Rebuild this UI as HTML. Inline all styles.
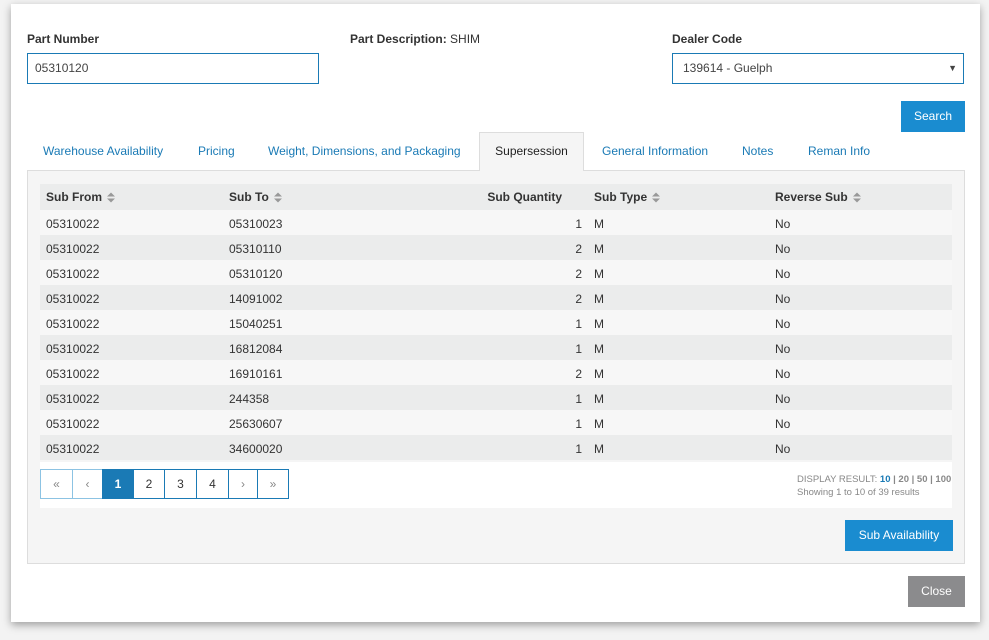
<!DOCTYPE html>
<html><head><style>
*{box-sizing:border-box;margin:0;padding:0}
body{width:989px;height:640px;background:#f3f3f3;font-family:"Liberation Sans",Arial,sans-serif;font-size:12px;color:#333;position:relative;overflow:hidden}
.modal{position:absolute;left:11px;top:4px;width:969px;height:618px;background:#fff;box-shadow:0 3px 8px rgba(0,0,0,.35)}
.a{position:absolute}
.lbl{font-weight:bold;font-size:12px;color:#333}
.inp{border:1px solid #1a7ab5;height:31px;padding-left:7px;line-height:29px;font-size:12px;color:#444}
.btn{background:#1a8cd0;color:#fff;text-align:center;font-size:12px}
.tab{color:#1a7ab5;font-size:12px;top:140px}
.panel{left:16px;top:166px;width:938px;height:394px;background:#f5f5f5;border:1px solid #ddd}
table{position:absolute;left:12px;top:13px;width:912px;border-collapse:collapse}
td,th{height:25px;font-size:12px;text-align:left;padding:0;color:#333}
td{padding-top:2px}
th{height:26px;font-weight:bold;background:#ebecec}
tr:nth-child(odd) td{background:#ebecec}
tr:nth-child(even) td{background:#f7f7f7}
.s{display:inline-block;vertical-align:middle;margin-left:2px}
.pg{position:absolute;left:12px;top:291px;width:912px;height:46px;background:#fff}
.pb{position:absolute;top:7px;height:30px;border:1px solid #1a7ab5;text-align:center;line-height:28px;font-size:12px;color:#333;background:#fff}
</style></head><body>
<div class="modal">
<div class="a lbl" style="left:16px;top:28px">Part Number</div>
<div class="a" style="left:339px;top:28px"><b>Part Description:</b> SHIM</div>
<div class="a lbl" style="left:661px;top:28px">Dealer Code</div>
<div class="a inp" style="left:16px;top:49px;width:292px">05310120</div>
<div class="a inp" style="left:661px;top:49px;width:292px;padding-left:10px">139614 - Guelph<span style="position:absolute;right:6px;top:0;font-size:9px;color:#444">▼</span></div>
<div class="a btn" style="left:890px;top:97px;width:64px;height:31px;line-height:31px">Search</div>
<div class="a tab" style="left:32px">Warehouse Availability</div>
<div class="a tab" style="left:187px">Pricing</div>
<div class="a tab" style="left:257px">Weight, Dimensions, and Packaging</div>
<div class="a" style="left:468px;top:128px;width:105px;height:39px;background:#f5f5f5;border:1px solid #ddd;border-bottom:none;z-index:2;text-align:center;line-height:37px;color:#222">Supersession</div>
<div class="a tab" style="left:591px">General Information</div>
<div class="a tab" style="left:731px">Notes</div>
<div class="a tab" style="left:797px">Reman Info</div>
<div class="a panel">
<table>
<tr><th style="width:189px;padding-left:6px">Sub From <svg class="s" width="8" height="11" viewBox="0 0 8 11"><path d="M0 4.5L4 0.5L8 4.5ZM0 6.5L4 10.5L8 6.5Z" fill="#999"/></svg></th><th style="width:176px">Sub To <svg class="s" width="8" height="11" viewBox="0 0 8 11"><path d="M0 4.5L4 0.5L8 4.5ZM0 6.5L4 10.5L8 6.5Z" fill="#999"/></svg></th><th style="width:189px;text-align:right;padding-right:32px">Sub Quantity</th><th style="width:181px">Sub Type <svg class="s" width="8" height="11" viewBox="0 0 8 11"><path d="M0 4.5L4 0.5L8 4.5ZM0 6.5L4 10.5L8 6.5Z" fill="#999"/></svg></th><th>Reverse Sub <svg class="s" width="8" height="11" viewBox="0 0 8 11"><path d="M0 4.5L4 0.5L8 4.5ZM0 6.5L4 10.5L8 6.5Z" fill="#999"/></svg></th></tr>
<tr><td style="padding-left:6px">05310022</td><td>05310023</td><td style="text-align:right;padding-right:12px">1</td><td>M</td><td>No</td></tr>
<tr><td style="padding-left:6px">05310022</td><td>05310110</td><td style="text-align:right;padding-right:12px">2</td><td>M</td><td>No</td></tr>
<tr><td style="padding-left:6px">05310022</td><td>05310120</td><td style="text-align:right;padding-right:12px">2</td><td>M</td><td>No</td></tr>
<tr><td style="padding-left:6px">05310022</td><td>14091002</td><td style="text-align:right;padding-right:12px">2</td><td>M</td><td>No</td></tr>
<tr><td style="padding-left:6px">05310022</td><td>15040251</td><td style="text-align:right;padding-right:12px">1</td><td>M</td><td>No</td></tr>
<tr><td style="padding-left:6px">05310022</td><td>16812084</td><td style="text-align:right;padding-right:12px">1</td><td>M</td><td>No</td></tr>
<tr><td style="padding-left:6px">05310022</td><td>16910161</td><td style="text-align:right;padding-right:12px">2</td><td>M</td><td>No</td></tr>
<tr><td style="padding-left:6px">05310022</td><td>244358</td><td style="text-align:right;padding-right:12px">1</td><td>M</td><td>No</td></tr>
<tr><td style="padding-left:6px">05310022</td><td>25630607</td><td style="text-align:right;padding-right:12px">1</td><td>M</td><td>No</td></tr>
<tr><td style="padding-left:6px">05310022</td><td>34600020</td><td style="text-align:right;padding-right:12px">1</td><td>M</td><td>No</td></tr>
</table>
<div class="pg">
<div class="pb" style="left:0;width:33px;border-color:#8cc3e3;color:#888">«</div>
<div class="pb" style="left:32px;width:31px;border-color:#8cc3e3;color:#888">‹</div>
<div class="pb" style="left:62px;width:32px;background:#1a7ab5;color:#fff;font-weight:bold">1</div>
<div class="pb" style="left:93px;width:32px">2</div>
<div class="pb" style="left:124px;width:33px">3</div>
<div class="pb" style="left:156px;width:33px">4</div>
<div class="pb" style="left:188px;width:30px;color:#888">›</div>
<div class="pb" style="left:217px;width:32px;color:#888">»</div>
<div class="a" style="left:757px;top:11px;font-size:9.5px;color:#888;white-space:nowrap;line-height:13px">DISPLAY RESULT: <b style="color:#1a7ab5">10</b> <b>| 20 | 50 | 100</b><br>Showing 1 to 10 of 39 results</div>
</div>
<div class="a btn" style="left:817px;top:349px;width:108px;height:31px;line-height:31px">Sub Availability</div>
</div>
<div class="a" style="left:897px;top:572px;width:57px;height:31px;line-height:31px;background:#8b8b8d;color:#fff;text-align:center">Close</div>
</div>
</body></html>
